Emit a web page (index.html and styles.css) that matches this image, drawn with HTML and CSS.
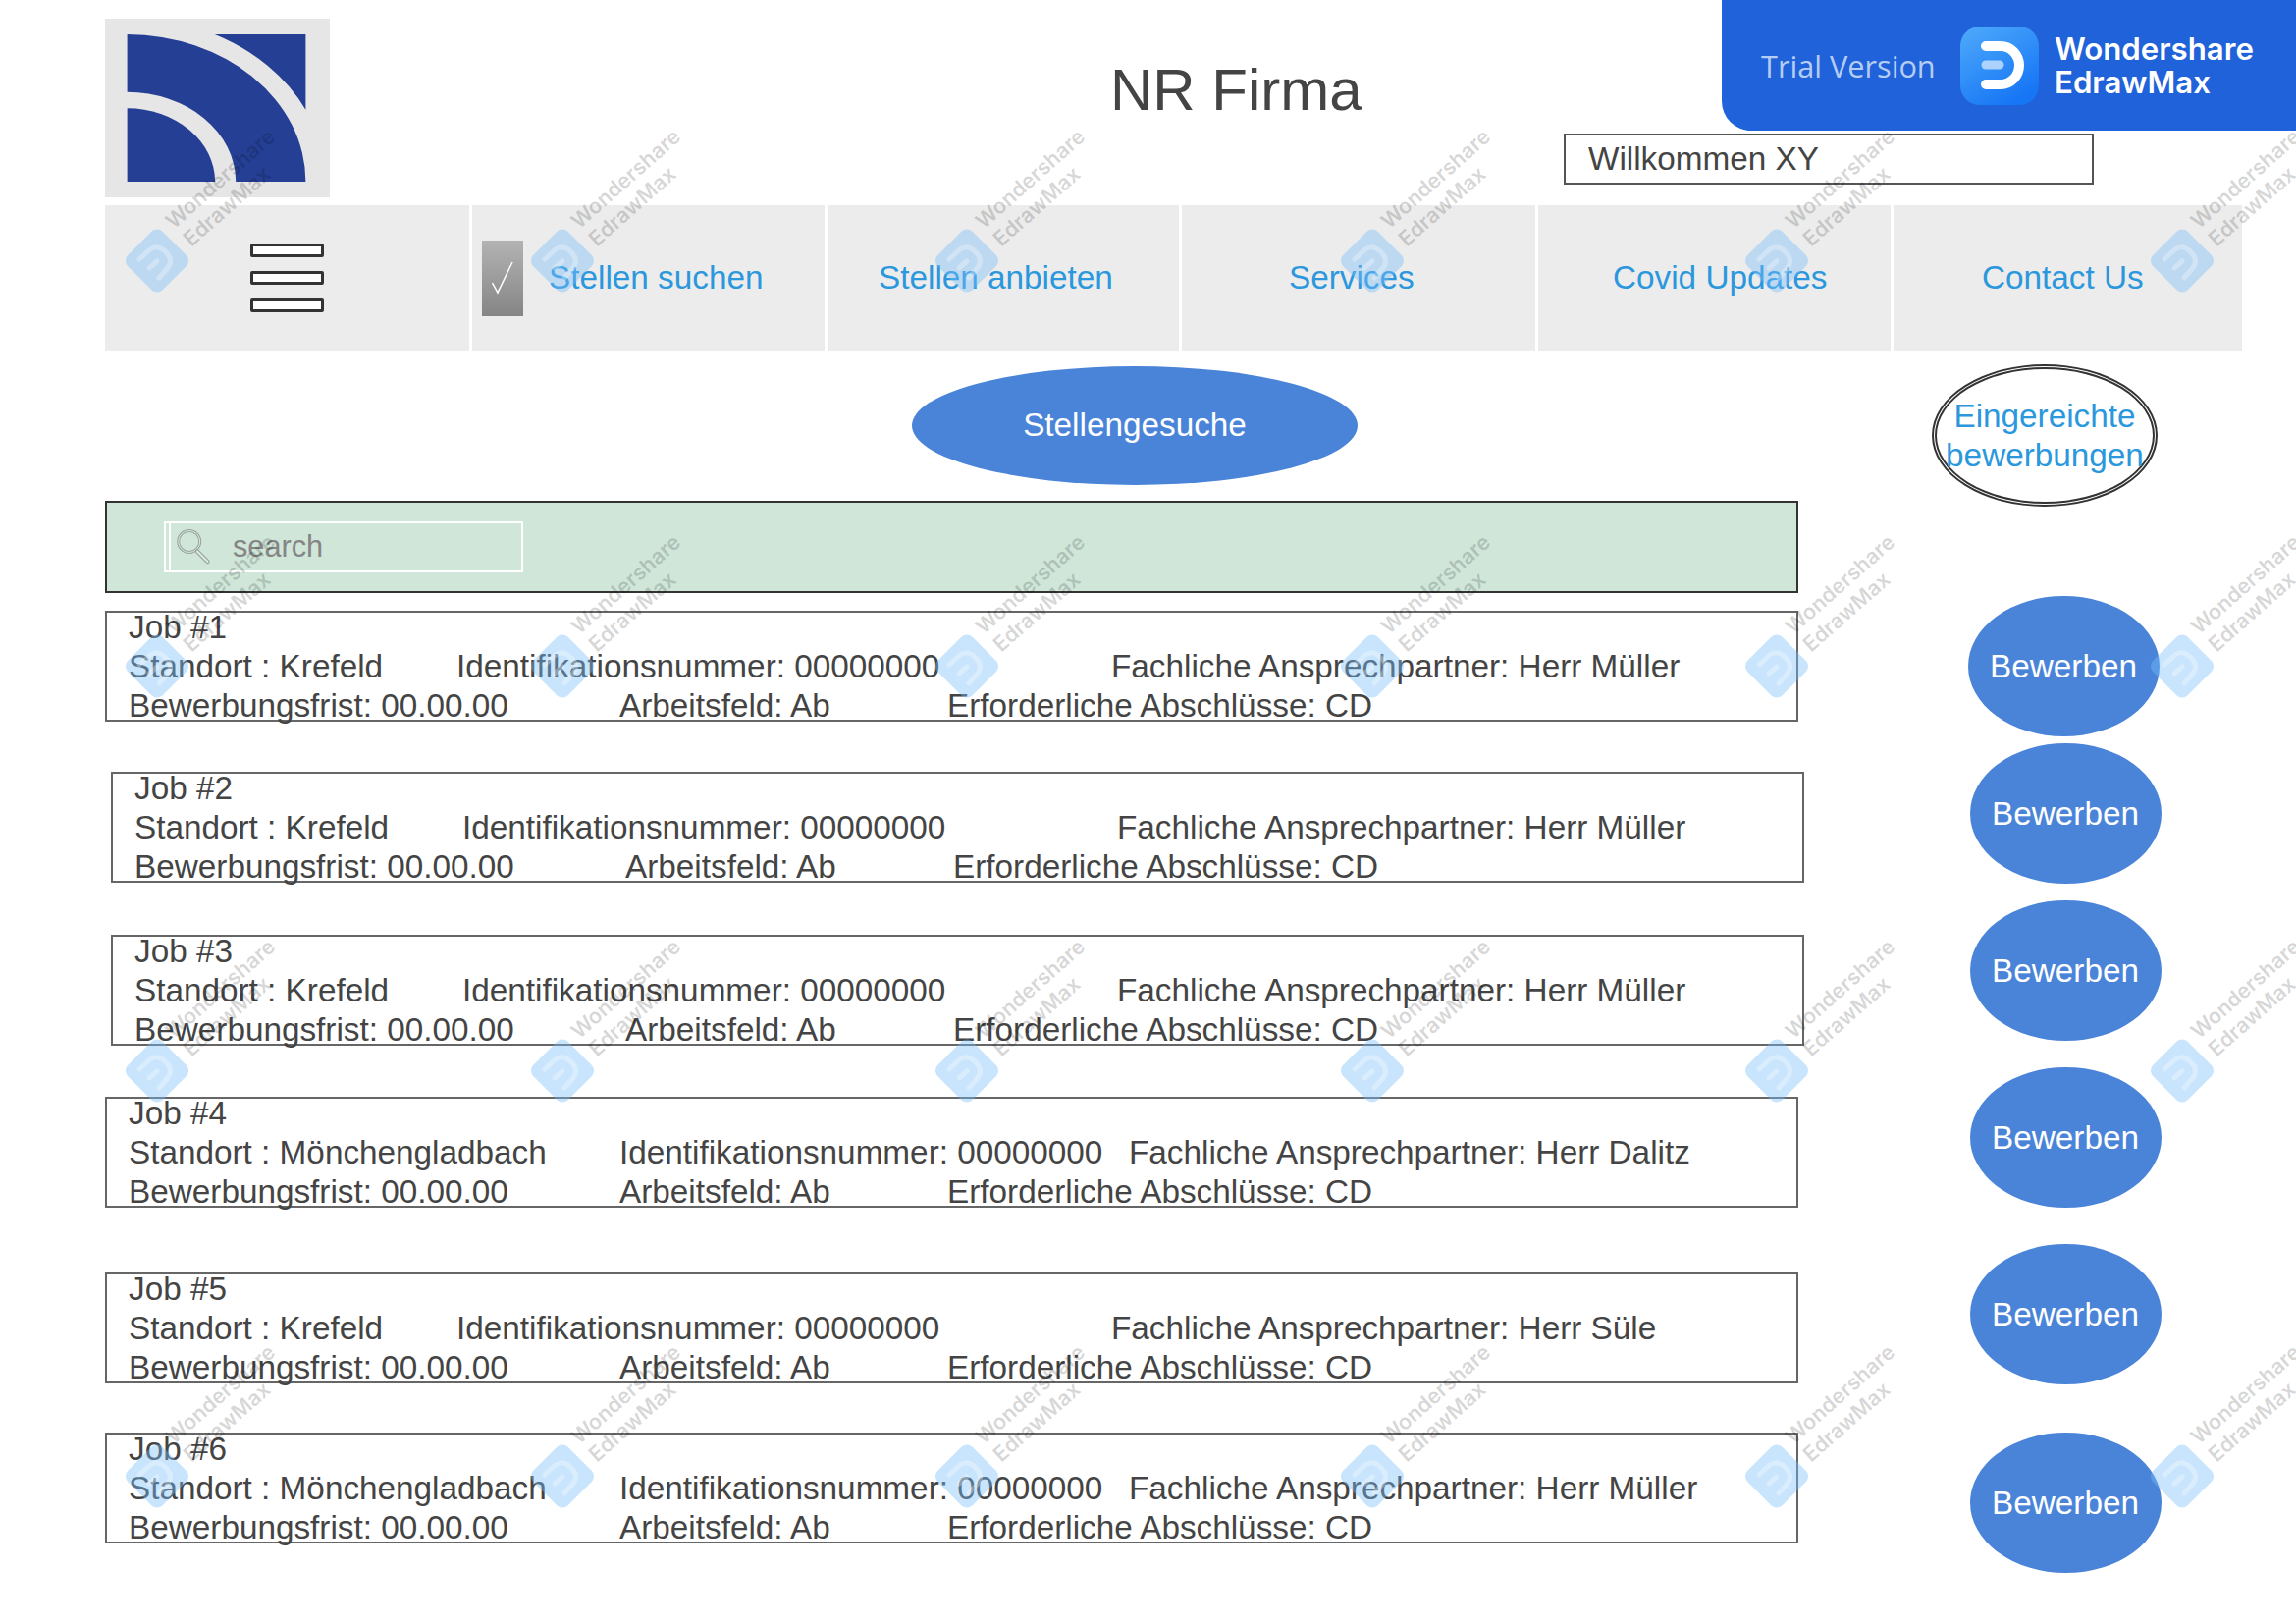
FILE: index.html
```html
<!DOCTYPE html>
<html lang="de">
<head>
<meta charset="utf-8">
<title>NR Firma</title>
<link rel="stylesheet" href="styles.css">
</head>
<body>
<div class="page">
  <header class="header">
    <div class="logo">
      <svg width="229" height="182" viewBox="0 0 229 182">
        <path class="logo-ink" d="M22.6 16A181.8 150 0 0 1 204.4 166H133.2A110.6 91.3 0 0 0 22.6 74.7Z"/>
        <path class="logo-ink" d="M22.6 91.3A89.5 74.7 0 0 1 112.1 166H22.6Z"/>
        <path class="logo-ink" d="M111.7 16H204.4V92.7A202 167 0 0 0 111.7 16Z"/>
      </svg>
    </div>
    <h1 class="title">NR Firma</h1>
    <div class="welcome">Willkommen XY</div>
  </header>

  <nav class="nav">
    <div class="nav-cell cell-menu">
      <span class="bar"></span><span class="bar"></span><span class="bar"></span>
    </div>
    <div class="nav-cell cell-search">
      <span class="check">
        <svg width="42" height="77" viewBox="0 0 42 77"><path class="check-mark" d="M10.5 43L16 53L31 22"/></svg>
      </span>
      <a class="nav-link">Stellen suchen</a>
    </div>
    <div class="nav-cell cell-offer"><a class="nav-link">Stellen anbieten</a></div>
    <div class="nav-cell cell-services"><a class="nav-link">Services</a></div>
    <div class="nav-cell cell-covid"><a class="nav-link">Covid Updates</a></div>
    <div class="nav-cell cell-contact"><a class="nav-link">Contact Us</a></div>
  </nav>

  <section class="actions">
    <div class="oval-primary">Stellengesuche</div>
    <div class="oval-outline">Eingereichte<br>bewerbungen</div>
  </section>

  <main class="main">
    <div class="jobs">
      <div class="searchbar">
        <div class="searchbox">
          <svg class="search-icon" width="40" height="40" viewBox="0 0 40 40">
            <circle class="lens-outer" cx="14.7" cy="14.5" r="11"/>
            <circle class="lens-inner" cx="14.7" cy="14.5" r="11"/>
            <path class="handle-outer" d="M23 24.5L33.5 35"/>
            <path class="handle-inner" d="M23 24.5L33.5 35"/>
          </svg>
          <span class="search-text">search</span>
        </div>
      </div>

      <article class="job job-1">
        <div>Job #1</div>
        <div class="line"><span class="c1">Standort : Krefeld</span><span class="c2">Identifikationsnummer: 00000000</span><span>Fachliche Ansprechpartner: Herr Müller</span></div>
        <div class="line"><span class="c3">Bewerbungsfrist: 00.00.00</span><span class="c4">Arbeitsfeld: Ab</span><span>Erforderliche Abschlüsse: CD</span></div>
      </article>
      <article class="job job-2">
        <div>Job #2</div>
        <div class="line"><span class="c1">Standort : Krefeld</span><span class="c2">Identifikationsnummer: 00000000</span><span>Fachliche Ansprechpartner: Herr Müller</span></div>
        <div class="line"><span class="c3">Bewerbungsfrist: 00.00.00</span><span class="c4">Arbeitsfeld: Ab</span><span>Erforderliche Abschlüsse: CD</span></div>
      </article>
      <article class="job job-3">
        <div>Job #3</div>
        <div class="line"><span class="c1">Standort : Krefeld</span><span class="c2">Identifikationsnummer: 00000000</span><span>Fachliche Ansprechpartner: Herr Müller</span></div>
        <div class="line"><span class="c3">Bewerbungsfrist: 00.00.00</span><span class="c4">Arbeitsfeld: Ab</span><span>Erforderliche Abschlüsse: CD</span></div>
      </article>
      <article class="job job-4">
        <div>Job #4</div>
        <div class="line"><span class="c3">Standort : Mönchengladbach</span><span class="c5">Identifikationsnummer: 00000000</span><span>Fachliche Ansprechpartner: Herr Dalitz</span></div>
        <div class="line"><span class="c3">Bewerbungsfrist: 00.00.00</span><span class="c4">Arbeitsfeld: Ab</span><span>Erforderliche Abschlüsse: CD</span></div>
      </article>
      <article class="job job-5">
        <div>Job #5</div>
        <div class="line"><span class="c1">Standort : Krefeld</span><span class="c2">Identifikationsnummer: 00000000</span><span>Fachliche Ansprechpartner: Herr Süle</span></div>
        <div class="line"><span class="c3">Bewerbungsfrist: 00.00.00</span><span class="c4">Arbeitsfeld: Ab</span><span>Erforderliche Abschlüsse: CD</span></div>
      </article>
      <article class="job job-6">
        <div>Job #6</div>
        <div class="line"><span class="c3">Standort : Mönchengladbach</span><span class="c5">Identifikationsnummer: 00000000</span><span>Fachliche Ansprechpartner: Herr Müller</span></div>
        <div class="line"><span class="c3">Bewerbungsfrist: 00.00.00</span><span class="c4">Arbeitsfeld: Ab</span><span>Erforderliche Abschlüsse: CD</span></div>
      </article>
    </div>

    <div class="apply-col">
      <div class="apply apply-1">Bewerben</div>
      <div class="apply apply-2">Bewerben</div>
      <div class="apply apply-3">Bewerben</div>
      <div class="apply apply-4">Bewerben</div>
      <div class="apply apply-5">Bewerben</div>
      <div class="apply apply-6">Bewerben</div>
    </div>
  </main>

  <svg class="defs" width="0" height="0">
    <symbol id="diamond" viewBox="0 0 64 65" width="64" height="65">
      <rect class="wm-shape" x="7" y="7.5" width="50" height="50" rx="8" transform="rotate(45 32 32.5)"/>
      <path class="wm-arc" d="M14 31L25 21Q32 16 39 22L42 25Q49 33 42 41L34 50"/>
      <path class="wm-arc" d="M24 40L32 33"/>
    </symbol>
  </svg>

  <div class="watermarks" aria-hidden="true">
    <div class="wm"><svg class="wm-svg" width="300" height="200"><use href="#diamond" y="100"/><text class="wm-text" transform="translate(49 101) rotate(-41.5)">Wondershare</text><text class="wm-text" transform="translate(67 119) rotate(-41.5)">EdrawMax</text></svg></div>
    <div class="wm"><svg class="wm-svg" width="300" height="200"><use href="#diamond" y="100"/><text class="wm-text" transform="translate(49 101) rotate(-41.5)">Wondershare</text><text class="wm-text" transform="translate(67 119) rotate(-41.5)">EdrawMax</text></svg></div>
    <div class="wm"><svg class="wm-svg" width="300" height="200"><use href="#diamond" y="100"/><text class="wm-text" transform="translate(49 101) rotate(-41.5)">Wondershare</text><text class="wm-text" transform="translate(67 119) rotate(-41.5)">EdrawMax</text></svg></div>
    <div class="wm"><svg class="wm-svg" width="300" height="200"><use href="#diamond" y="100"/><text class="wm-text" transform="translate(49 101) rotate(-41.5)">Wondershare</text><text class="wm-text" transform="translate(67 119) rotate(-41.5)">EdrawMax</text></svg></div>
    <div class="wm"><svg class="wm-svg" width="300" height="200"><use href="#diamond" y="100"/><text class="wm-text" transform="translate(49 101) rotate(-41.5)">Wondershare</text><text class="wm-text" transform="translate(67 119) rotate(-41.5)">EdrawMax</text></svg></div>
    <div class="wm"><svg class="wm-svg" width="300" height="200"><use href="#diamond" y="100"/><text class="wm-text" transform="translate(49 101) rotate(-41.5)">Wondershare</text><text class="wm-text" transform="translate(67 119) rotate(-41.5)">EdrawMax</text></svg></div>

    <div class="wm"><svg class="wm-svg" width="300" height="200"><use href="#diamond" y="100"/><text class="wm-text" transform="translate(49 101) rotate(-41.5)">Wondershare</text><text class="wm-text" transform="translate(67 119) rotate(-41.5)">EdrawMax</text></svg></div>
    <div class="wm"><svg class="wm-svg" width="300" height="200"><use href="#diamond" y="100"/><text class="wm-text" transform="translate(49 101) rotate(-41.5)">Wondershare</text><text class="wm-text" transform="translate(67 119) rotate(-41.5)">EdrawMax</text></svg></div>
    <div class="wm"><svg class="wm-svg" width="300" height="200"><use href="#diamond" y="100"/><text class="wm-text" transform="translate(49 101) rotate(-41.5)">Wondershare</text><text class="wm-text" transform="translate(67 119) rotate(-41.5)">EdrawMax</text></svg></div>
    <div class="wm"><svg class="wm-svg" width="300" height="200"><use href="#diamond" y="100"/><text class="wm-text" transform="translate(49 101) rotate(-41.5)">Wondershare</text><text class="wm-text" transform="translate(67 119) rotate(-41.5)">EdrawMax</text></svg></div>
    <div class="wm"><svg class="wm-svg" width="300" height="200"><use href="#diamond" y="100"/><text class="wm-text" transform="translate(49 101) rotate(-41.5)">Wondershare</text><text class="wm-text" transform="translate(67 119) rotate(-41.5)">EdrawMax</text></svg></div>
    <div class="wm"><svg class="wm-svg" width="300" height="200"><use href="#diamond" y="100"/><text class="wm-text" transform="translate(49 101) rotate(-41.5)">Wondershare</text><text class="wm-text" transform="translate(67 119) rotate(-41.5)">EdrawMax</text></svg></div>

    <div class="wm"><svg class="wm-svg" width="300" height="200"><use href="#diamond" y="100"/><text class="wm-text" transform="translate(49 101) rotate(-41.5)">Wondershare</text><text class="wm-text" transform="translate(67 119) rotate(-41.5)">EdrawMax</text></svg></div>
    <div class="wm"><svg class="wm-svg" width="300" height="200"><use href="#diamond" y="100"/><text class="wm-text" transform="translate(49 101) rotate(-41.5)">Wondershare</text><text class="wm-text" transform="translate(67 119) rotate(-41.5)">EdrawMax</text></svg></div>
    <div class="wm"><svg class="wm-svg" width="300" height="200"><use href="#diamond" y="100"/><text class="wm-text" transform="translate(49 101) rotate(-41.5)">Wondershare</text><text class="wm-text" transform="translate(67 119) rotate(-41.5)">EdrawMax</text></svg></div>
    <div class="wm"><svg class="wm-svg" width="300" height="200"><use href="#diamond" y="100"/><text class="wm-text" transform="translate(49 101) rotate(-41.5)">Wondershare</text><text class="wm-text" transform="translate(67 119) rotate(-41.5)">EdrawMax</text></svg></div>
    <div class="wm"><svg class="wm-svg" width="300" height="200"><use href="#diamond" y="100"/><text class="wm-text" transform="translate(49 101) rotate(-41.5)">Wondershare</text><text class="wm-text" transform="translate(67 119) rotate(-41.5)">EdrawMax</text></svg></div>
    <div class="wm"><svg class="wm-svg" width="300" height="200"><use href="#diamond" y="100"/><text class="wm-text" transform="translate(49 101) rotate(-41.5)">Wondershare</text><text class="wm-text" transform="translate(67 119) rotate(-41.5)">EdrawMax</text></svg></div>

    <div class="wm"><svg class="wm-svg" width="300" height="200"><use href="#diamond" y="100"/><text class="wm-text" transform="translate(49 101) rotate(-41.5)">Wondershare</text><text class="wm-text" transform="translate(67 119) rotate(-41.5)">EdrawMax</text></svg></div>
    <div class="wm"><svg class="wm-svg" width="300" height="200"><use href="#diamond" y="100"/><text class="wm-text" transform="translate(49 101) rotate(-41.5)">Wondershare</text><text class="wm-text" transform="translate(67 119) rotate(-41.5)">EdrawMax</text></svg></div>
    <div class="wm"><svg class="wm-svg" width="300" height="200"><use href="#diamond" y="100"/><text class="wm-text" transform="translate(49 101) rotate(-41.5)">Wondershare</text><text class="wm-text" transform="translate(67 119) rotate(-41.5)">EdrawMax</text></svg></div>
    <div class="wm"><svg class="wm-svg" width="300" height="200"><use href="#diamond" y="100"/><text class="wm-text" transform="translate(49 101) rotate(-41.5)">Wondershare</text><text class="wm-text" transform="translate(67 119) rotate(-41.5)">EdrawMax</text></svg></div>
    <div class="wm"><svg class="wm-svg" width="300" height="200"><use href="#diamond" y="100"/><text class="wm-text" transform="translate(49 101) rotate(-41.5)">Wondershare</text><text class="wm-text" transform="translate(67 119) rotate(-41.5)">EdrawMax</text></svg></div>
    <div class="wm"><svg class="wm-svg" width="300" height="200"><use href="#diamond" y="100"/><text class="wm-text" transform="translate(49 101) rotate(-41.5)">Wondershare</text><text class="wm-text" transform="translate(67 119) rotate(-41.5)">EdrawMax</text></svg></div>
  </div>

  <aside class="trial">
    <span class="trial-label">Trial Version</span>
    <svg class="trial-icon" width="80" height="80" viewBox="0 0 80 80">
      <defs>
        <linearGradient id="edraw" x1="0" y1="0" x2="0.6" y2="1">
          <stop offset="0" stop-color="#4fabfb"/>
          <stop offset="1" stop-color="#1776f5"/>
        </linearGradient>
      </defs>
      <rect width="80" height="80" rx="20" fill="url(#edraw)"/>
      <path class="trial-d" d="M26 20H41A19 19.5 0 0 1 41 59H26"/>
      <path class="trial-bar" d="M26 39H40"/>
    </svg>
    <span class="trial-brand">Wondershare<br>EdrawMax</span>
  </aside>
</div>
</body>
</html>
```
FILE: styles.css
```css
* { box-sizing: border-box; }

html, body {
  margin: 0;
  padding: 0;
  background: #fff;
}

.page {
  position: relative;
  width: 2339px;
  height: 1654px;
  overflow: hidden;
  font-family: "Liberation Sans", Arial, sans-serif;
  font-size: 33.3px;
  line-height: 40px;
  color: #444;
}

/* header */
.header {
  display: flex;
  align-items: flex-start;
  height: 209px;
  padding: 19px 0 0 107px;
}

.logo {
  flex: none;
  width: 229px;
  height: 182px;
  background: #e6e6e6;
}

.logo svg { display: block; }
.logo-ink { fill: #253f95; }

.title {
  flex: none;
  width: 258px;
  margin: 38px 0 0 795px;
  font-size: 60px;
  font-weight: 400;
  line-height: 70px;
  white-space: nowrap;
}

.welcome {
  flex: none;
  width: 540px;
  height: 52px;
  margin: 117px 0 0 204px;
  padding-left: 23px;
  border: 2px solid #555;
  line-height: 48px;
  background: #fff;
}

/* navigation */
.nav {
  display: flex;
  gap: 3px;
  width: 2177px;
  height: 148px;
  margin-left: 107px;
}

.nav-cell {
  display: flex;
  align-items: center;
  background: #ececec;
}

.nav-link {
  color: #2b97dd;
  white-space: nowrap;
}

.cell-menu {
  flex-direction: column;
  align-items: flex-start;
  justify-content: center;
  gap: 14px;
  width: 371px;
  padding-left: 148px;
}

.cell-search { width: 359px; padding-left: 10px; }
.cell-offer { width: 358px; padding-left: 52px; }
.cell-services { width: 360px; padding-left: 109px; }
.cell-covid { width: 359px; padding-left: 76px; }
.cell-contact { width: 355px; padding-left: 90px; }

.bar {
  display: block;
  width: 75px;
  height: 14px;
  border: 3px solid #333;
  border-radius: 2px;
  background: #fff;
}

.check {
  flex: none;
  width: 42px;
  height: 77px;
  margin-right: 26px;
  background: linear-gradient(#b3b3b3, #858585);
}

.check svg { display: block; }

.check-mark {
  fill: none;
  stroke: #fff;
  stroke-width: 1.5;
}

/* primary actions */
.actions {
  display: flex;
  align-items: flex-start;
  height: 153px;
  padding: 16px 0 0 929px;
}

.oval-primary {
  display: flex;
  align-items: center;
  justify-content: center;
  flex: none;
  width: 454px;
  height: 121px;
  padding-bottom: 2px;
  border-radius: 50%;
  background: #4a84d9;
  color: #fff;
}

.oval-outline {
  flex: none;
  width: 230px;
  height: 145px;
  margin: -2px 0 0 585px;
  border: 5px double #333;
  border-radius: 50%;
  padding-top: 28px;
  color: #2b97dd;
  text-align: center;
  white-space: nowrap;
  background: #fff;
}

/* jobs */
.main { display: flex; align-items: flex-start; }

.jobs {
  flex: none;
  width: 1838px;
  padding-left: 107px;
}

.searchbar {
  display: flex;
  align-items: center;
  width: 1725px;
  height: 94px;
  padding-left: 58px;
  border: 2px solid #333;
  background: #cfe6d9;
}

.searchbox {
  display: flex;
  align-items: center;
  width: 366px;
  height: 52px;
  padding-left: 9px;
  border: 2px solid #fff;
  background: linear-gradient(#fff, #fff) 3px 0 / 2px 100% no-repeat;
}

.search-icon { flex: none; }

.lens-outer, .lens-inner, .handle-outer, .handle-inner { fill: none; }
.lens-outer { stroke: #9aa5a0; stroke-width: 3; }
.lens-inner { stroke: #dbeae2; stroke-width: 1; }
.handle-outer { stroke: #9aa5a0; stroke-width: 4.5; stroke-linecap: round; }
.handle-inner { stroke: #dbeae2; stroke-width: 2; stroke-linecap: round; }

.search-text {
  margin-left: 19px;
  font-size: 30.7px;
  color: #858585;
}

.job {
  display: flex;
  flex-direction: column;
  justify-content: center;
  width: 1725px;
  height: 113px;
  padding-left: 22px;
  border: 2px solid #666;
  white-space: nowrap;
}

.line { display: flex; }

.c1 { width: 334px; }
.c2 { width: 667px; }
.c3 { width: 500px; }
.c4 { width: 334px; }
.c5 { width: 519px; }

.job-1 { margin-top: 18px; }
.job-2 { margin: 51px 0 0 6px; }
.job-3 { margin: 53px 0 0 6px; }
.job-4 { margin-top: 52px; }
.job-5 { margin-top: 66px; }
.job-6 { margin-top: 50px; }

/* apply buttons */
.apply-col {
  flex: none;
  padding-left: 169px;
}

.apply {
  display: flex;
  align-items: center;
  justify-content: center;
  width: 195px;
  height: 143px;
  padding-right: 1px;
  border-radius: 50%;
  background: #4a84d9;
  color: #fff;
}

.apply-1 { margin: 97px 0 0 -2px; }
.apply-2 { margin-top: 7px; }
.apply-3 { margin-top: 17px; }
.apply-4 { margin-top: 27px; }
.apply-5 { margin-top: 37px; }
.apply-6 { margin-top: 49px; }

/* watermark layer */
.defs { position: absolute; }

.watermarks {
  position: absolute;
  inset: 0;
  display: grid;
  grid-template-columns: repeat(6, 412.6px);
  grid-auto-rows: 412.6px;
  padding: 133px 0 0 128px;
  pointer-events: none;
}

.wm-svg {
  display: block;
  overflow: visible;
}

.wm-shape { fill: rgba(120, 190, 250, 0.4); }

.wm-arc {
  fill: none;
  stroke: rgba(255, 255, 255, 0.3);
  stroke-width: 5;
  stroke-linecap: round;
}

.wm-text {
  font-family: Inter, "Liberation Sans", sans-serif;
  font-size: 21.5px;
  font-weight: 600;
  fill: rgba(0, 0, 0, 0.17);
}

/* trial banner */
.trial {
  position: absolute;
  top: 0;
  right: 0;
  display: flex;
  align-items: center;
  width: 585px;
  height: 133px;
  padding-left: 40px;
  border-bottom-left-radius: 30px;
  background: #1f62d9;
}

.trial-label {
  width: 203px;
  font-family: "Open Sans", sans-serif;
  font-size: 30.7px;
  color: #b6cdf3;
  white-space: nowrap;
}

.trial-icon { flex: none; }

.trial-d {
  fill: none;
  stroke: #fff;
  stroke-width: 10;
  stroke-linecap: round;
}

.trial-bar {
  fill: none;
  stroke: rgba(255, 255, 255, 0.6);
  stroke-width: 9;
  stroke-linecap: round;
}

.trial-brand {
  margin-left: 16px;
  font-family: Inter, sans-serif;
  font-size: 31.2px;
  font-weight: 600;
  line-height: 34px;
  color: #fff;
  white-space: nowrap;
}
```
